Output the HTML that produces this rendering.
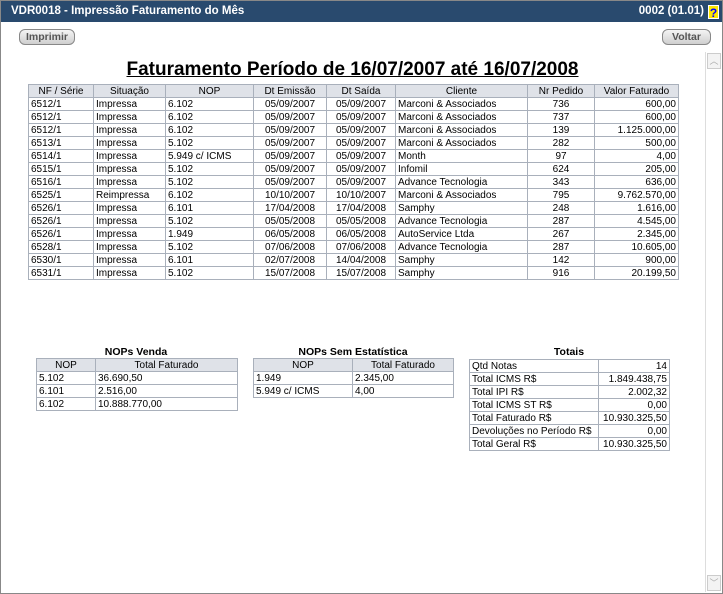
<!DOCTYPE html>
<html><head><meta charset="utf-8"><style>
*{margin:0;padding:0;box-sizing:border-box}
body{width:723px;height:594px;overflow:hidden;background:#fff;font-family:"Liberation Sans",Arial,sans-serif;font-size:11px;color:#000;position:relative}
.frame{position:absolute;left:0;top:0;width:723px;height:594px;border:1px solid #888}
.bar{position:absolute;left:1px;top:1px;width:721px;height:21px;background:#294a6e;color:#fff;font-weight:bold;font-size:11.5px;line-height:21px;padding-left:10px}
.bar .r{position:absolute;right:18px;top:0}
.help{position:absolute;right:3px;top:4px;width:11px;height:14px;background:#ffe800;color:#00f;font-size:12px;line-height:14px;text-align:center;border:1px solid #fff}
.btn{position:absolute;top:29px;height:16px;border:1px solid #888;border-radius:6px;background:linear-gradient(#f4f4f4,#cfcfcf);color:#555;font-weight:bold;font-size:10.5px;line-height:14px;text-align:center}
.sb{position:absolute;left:705px;top:52px;width:16px;height:540px;border-left:1px solid #ddd;background:#fff}
.sb .a{position:absolute;left:1px;width:14px;height:16px;border:1px solid #ccc;background:#f3f3f3;color:#aaa;font-size:9px;text-align:center;line-height:14px}
h1{position:absolute;left:0;width:705px;top:59px;text-align:center;font-size:19px;font-weight:bold;text-decoration:underline}
table{position:absolute;border-collapse:collapse;table-layout:fixed}
td,th{border:1px solid #a9b0bb;height:13px;line-height:11px;padding:0 2px;white-space:nowrap;overflow:hidden;font-weight:normal;font-size:10px}
th{background:#dfe2e8;text-align:center}
.c{text-align:center}.rt{text-align:right}
.t{position:absolute;font-weight:bold;font-size:10.5px;text-align:center}
</style></head><body>
<div class="frame"></div>
<div class="bar">VDR0018 - Impressão Faturamento do Mês<span class="r">0002 (01.01)</span><div class="help">?</div></div>
<div class="btn" style="left:19px;width:56px">Imprimir</div>
<div class="btn" style="left:662px;width:49px">Voltar</div>
<div class="sb"><div class="a" style="top:1px">︿</div><div class="a" style="bottom:1px">﹀</div></div>
<h1>Faturamento Período de 16/07/2007 até 16/07/2008</h1>
<table style="left:28px;top:84px;width:650px">
<colgroup><col style="width:65px"><col style="width:72px"><col style="width:88px"><col style="width:73px"><col style="width:69px"><col style="width:132px"><col style="width:67px"><col style="width:84px"></colgroup>
<tr><th>NF / Série</th><th>Situação</th><th>NOP</th><th>Dt Emissão</th><th>Dt Saída</th><th>Cliente</th><th>Nr Pedido</th><th>Valor Faturado</th></tr>
<tr><td>6512/1</td><td>Impressa</td><td>6.102</td><td class="c">05/09/2007</td><td class="c">05/09/2007</td><td>Marconi &amp; Associados</td><td class="c">736</td><td class="rt">600,00</td></tr>
<tr><td>6512/1</td><td>Impressa</td><td>6.102</td><td class="c">05/09/2007</td><td class="c">05/09/2007</td><td>Marconi &amp; Associados</td><td class="c">737</td><td class="rt">600,00</td></tr>
<tr><td>6512/1</td><td>Impressa</td><td>6.102</td><td class="c">05/09/2007</td><td class="c">05/09/2007</td><td>Marconi &amp; Associados</td><td class="c">139</td><td class="rt">1.125.000,00</td></tr>
<tr><td>6513/1</td><td>Impressa</td><td>5.102</td><td class="c">05/09/2007</td><td class="c">05/09/2007</td><td>Marconi &amp; Associados</td><td class="c">282</td><td class="rt">500,00</td></tr>
<tr><td>6514/1</td><td>Impressa</td><td>5.949 c/ ICMS</td><td class="c">05/09/2007</td><td class="c">05/09/2007</td><td>Month</td><td class="c">97</td><td class="rt">4,00</td></tr>
<tr><td>6515/1</td><td>Impressa</td><td>5.102</td><td class="c">05/09/2007</td><td class="c">05/09/2007</td><td>Infomil</td><td class="c">624</td><td class="rt">205,00</td></tr>
<tr><td>6516/1</td><td>Impressa</td><td>5.102</td><td class="c">05/09/2007</td><td class="c">05/09/2007</td><td>Advance Tecnologia</td><td class="c">343</td><td class="rt">636,00</td></tr>
<tr><td>6525/1</td><td>Reimpressa</td><td>6.102</td><td class="c">10/10/2007</td><td class="c">10/10/2007</td><td>Marconi &amp; Associados</td><td class="c">795</td><td class="rt">9.762.570,00</td></tr>
<tr><td>6526/1</td><td>Impressa</td><td>6.101</td><td class="c">17/04/2008</td><td class="c">17/04/2008</td><td>Samphy</td><td class="c">248</td><td class="rt">1.616,00</td></tr>
<tr><td>6526/1</td><td>Impressa</td><td>5.102</td><td class="c">05/05/2008</td><td class="c">05/05/2008</td><td>Advance Tecnologia</td><td class="c">287</td><td class="rt">4.545,00</td></tr>
<tr><td>6526/1</td><td>Impressa</td><td>1.949</td><td class="c">06/05/2008</td><td class="c">06/05/2008</td><td>AutoService Ltda</td><td class="c">267</td><td class="rt">2.345,00</td></tr>
<tr><td>6528/1</td><td>Impressa</td><td>5.102</td><td class="c">07/06/2008</td><td class="c">07/06/2008</td><td>Advance Tecnologia</td><td class="c">287</td><td class="rt">10.605,00</td></tr>
<tr><td>6530/1</td><td>Impressa</td><td>6.101</td><td class="c">02/07/2008</td><td class="c">14/04/2008</td><td>Samphy</td><td class="c">142</td><td class="rt">900,00</td></tr>
<tr><td>6531/1</td><td>Impressa</td><td>5.102</td><td class="c">15/07/2008</td><td class="c">15/07/2008</td><td>Samphy</td><td class="c">916</td><td class="rt">20.199,50</td></tr>
</table>
<div class="t" style="left:36px;width:200px;top:346px">NOPs Venda</div>
<table style="left:36px;top:358px;width:201px">
<colgroup><col style="width:59px"><col style="width:142px"></colgroup>
<tr><th>NOP</th><th>Total Faturado</th></tr>
<tr><td>5.102</td><td>36.690,50</td></tr>
<tr><td>6.101</td><td>2.516,00</td></tr>
<tr><td>6.102</td><td>10.888.770,00</td></tr>
</table>
<div class="t" style="left:253px;width:200px;top:346px">NOPs Sem Estatística</div>
<table style="left:253px;top:358px;width:200px">
<colgroup><col style="width:99px"><col style="width:101px"></colgroup>
<tr><th>NOP</th><th>Total Faturado</th></tr>
<tr><td>1.949</td><td>2.345,00</td></tr>
<tr><td>5.949 c/ ICMS</td><td>4,00</td></tr>
</table>
<div class="t" style="left:469px;width:200px;top:346px">Totais</div>
<table style="left:469px;top:359px;width:200px">
<colgroup><col style="width:129px"><col style="width:71px"></colgroup>
<tr><td>Qtd Notas</td><td class="rt">14</td></tr>
<tr><td>Total ICMS R$</td><td class="rt">1.849.438,75</td></tr>
<tr><td>Total IPI R$</td><td class="rt">2.002,32</td></tr>
<tr><td>Total ICMS ST R$</td><td class="rt">0,00</td></tr>
<tr><td>Total Faturado R$</td><td class="rt">10.930.325,50</td></tr>
<tr><td>Devoluções no Período R$</td><td class="rt">0,00</td></tr>
<tr><td>Total Geral R$</td><td class="rt">10.930.325,50</td></tr>
</table>
</body></html>
